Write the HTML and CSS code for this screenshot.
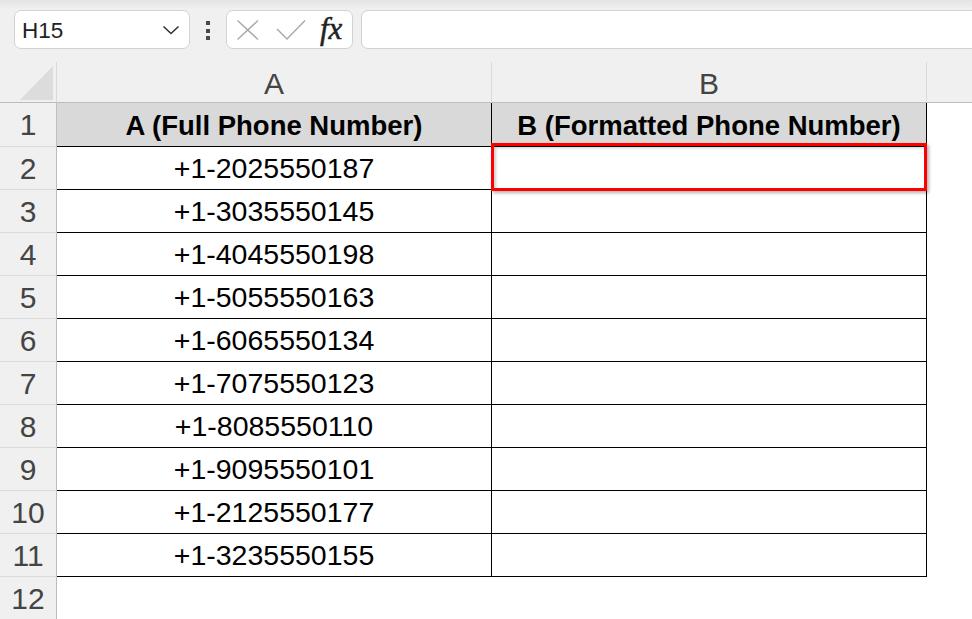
FILE: index.html
```html
<!DOCTYPE html>
<html lang="en">
<head>
  <meta charset="UTF-8" />
  <title>Phone Numbers</title>
  <link rel="stylesheet" href="styles.css">
</head>
<body>
  <div class="toolbar">
    <div class="namebox">
      <span class="namebox__text">H15</span>
      <svg class="namebox__chevron" width="18" height="10" viewBox="0 0 18 10">
        <polyline points="1.5,1.5 9,8.5 16.5,1.5" />
      </svg>
    </div>
    <svg class="more" width="6" height="24" viewBox="0 0 6 24">
      <rect x="1" y="2" width="4" height="4" />
      <rect x="1" y="10" width="4" height="4" />
      <rect x="1" y="17" width="4" height="4" />
    </svg>
    <div class="fx-buttons">
      <svg class="fx-icon" width="24" height="22" viewBox="0 0 24 22">
        <line x1="1.5" y1="1.5" x2="22" y2="20.5" />
        <line x1="22" y1="1.5" x2="1.5" y2="20.5" />
      </svg>
      <svg class="fx-icon" width="30" height="22" viewBox="0 0 30 22">
        <polyline points="1,10 11,20 29,1.5" />
      </svg>
      <span class="fx">fx</span>
    </div>
    <div class="formula-input"></div>
  </div>

  <div class="sheet">
    <div class="corner">
      <svg width="56" height="40" viewBox="0 0 56 40">
        <polygon points="20,38 53,4 53,38" />
      </svg>
    </div>
    <div class="col-head">A</div>
    <div class="col-head">B</div>
    <div class="col-head col-head--rest"></div>

    <div class="row-head">1</div>
    <div class="cell cell--title">A (Full Phone Number)</div>
    <div class="cell cell--title">B (Formatted Phone Number)</div>
    <div class="rest"></div>

    <div class="row-head">2</div>
    <div class="cell">+1-2025550187</div>
    <div class="cell cell--active"><div class="selection"></div></div>
    <div class="rest"></div>

    <div class="row-head">3</div>
    <div class="cell">+1-3035550145</div>
    <div class="cell"></div>
    <div class="rest"></div>

    <div class="row-head">4</div>
    <div class="cell">+1-4045550198</div>
    <div class="cell"></div>
    <div class="rest"></div>

    <div class="row-head">5</div>
    <div class="cell">+1-5055550163</div>
    <div class="cell"></div>
    <div class="rest"></div>

    <div class="row-head">6</div>
    <div class="cell">+1-6065550134</div>
    <div class="cell"></div>
    <div class="rest"></div>

    <div class="row-head">7</div>
    <div class="cell">+1-7075550123</div>
    <div class="cell"></div>
    <div class="rest"></div>

    <div class="row-head">8</div>
    <div class="cell">+1-8085550110</div>
    <div class="cell"></div>
    <div class="rest"></div>

    <div class="row-head">9</div>
    <div class="cell">+1-9095550101</div>
    <div class="cell"></div>
    <div class="rest"></div>

    <div class="row-head">10</div>
    <div class="cell">+1-2125550177</div>
    <div class="cell"></div>
    <div class="rest"></div>

    <div class="row-head">11</div>
    <div class="cell">+1-3235550155</div>
    <div class="cell"></div>
    <div class="rest"></div>

    <div class="row-head row-head--last">12</div>
    <div class="rest"></div>
    <div class="rest"></div>
    <div class="rest"></div>
  </div>
</body>
</html>
```

FILE: styles.css
```css
:root {
  --chrome: #f0f0f0;
  --chrome-line: #bdbdbd;
  --soft-line: #dadada;
  --head-text: #444;
  --title-bg: #d9d9d9;
}

html, body {
  margin: 0;
  height: 100%;
  overflow: hidden;
}

body {
  font-family: "Liberation Sans", Arial, sans-serif;
  background: #fff;
  color: #000;
}

/* formula bar */
.toolbar {
  height: 62px;
  box-sizing: border-box;
  display: flex;
  align-items: flex-start;
  padding: 10px 0 0 14px;
  background: linear-gradient(#e4e4e4, var(--chrome) 9px);
  overflow: hidden;
}

.namebox {
  width: 176px;
  height: 39px;
  box-sizing: border-box;
  background: #fff;
  border: 1px solid #d2d2d2;
  border-radius: 7px;
  display: flex;
  align-items: center;
  justify-content: space-between;
  padding: 0 9px 0 7px;
}
.namebox__text {
  font-size: 22.5px;
  color: #222;
  padding-top: 2px;
}
.namebox__chevron polyline {
  fill: none;
  stroke: #333;
  stroke-width: 1.6;
}

.more {
  margin: 9px 0 0 15px;
}
.more rect {
  fill: #4a4a4a;
}

.fx-buttons {
  margin-left: 15px;
  width: 127px;
  height: 39px;
  box-sizing: border-box;
  background: #fff;
  border: 1px solid #d2d2d2;
  border-radius: 7px;
  display: flex;
  align-items: center;
  padding: 0 0 0 9px;
}
.fx-icon {
  margin-right: 16px;
}
.fx-icon line,
.fx-icon polyline {
  fill: none;
  stroke: #ababab;
  stroke-width: 1.5;
}
.fx {
  font-family: "Liberation Serif", "Times New Roman", serif;
  font-style: italic;
  font-size: 31px;
  color: #222;
  -webkit-text-stroke: 0.5px #222;
  margin-left: -2px;
  line-height: 1;
  padding-bottom: 3px;
}

.formula-input {
  flex: 1;
  margin-left: 8px;
  margin-right: -12px;
  height: 39px;
  box-sizing: border-box;
  background: #fff;
  border: 1px solid #d2d2d2;
  border-radius: 7px;
}

/* grid */
.sheet {
  display: grid;
  grid-template-columns: 57px 435px 435px 1fr;
  grid-template-rows: 41px 44px repeat(10, 43px) 42px;
}
.sheet > div {
  box-sizing: border-box;
}

.corner {
  background: var(--chrome);
  border-right: 1px solid var(--soft-line);
  border-bottom: 1px solid var(--chrome-line);
}
.corner svg {
  display: block;
}
.corner polygon {
  fill: #dcdcdc;
}

.col-head {
  background: var(--chrome);
  border-right: 1px solid var(--soft-line);
  border-bottom: 1px solid var(--chrome-line);
  color: var(--head-text);
  font-size: 30px;
  display: flex;
  align-items: center;
  justify-content: center;
  padding-top: 4px;
}
.col-head--rest {
  border-right: none;
}

.row-head {
  background: var(--chrome);
  border-right: 1px solid var(--chrome-line);
  border-bottom: 1px solid var(--soft-line);
  color: var(--head-text);
  font-size: 30px;
  display: flex;
  align-items: center;
  justify-content: center;
  padding-top: 1px;
}
.row-head--last {
  border-bottom: none;
}

.cell {
  background: #fff;
  border-right: 1px solid #000;
  border-bottom: 1px solid #000;
  font-size: 28.5px;
  display: flex;
  align-items: center;
  justify-content: center;
}
.cell--title {
  background: var(--title-bg);
  font-weight: bold;
  font-size: 27.5px;
  padding-top: 2px;
}
.cell--active {
  position: relative;
}

.rest {
  background: #fff;
}

.selection {
  position: absolute;
  left: -1px;
  top: -4px;
  width: 436px;
  height: 48px;
  box-sizing: border-box;
  border: 3px solid #ff0000;
  box-shadow: 2px 2px 3px rgba(0, 0, 0, 0.3), inset 2px 2px 3px rgba(0, 0, 0, 0.2);
}
```
